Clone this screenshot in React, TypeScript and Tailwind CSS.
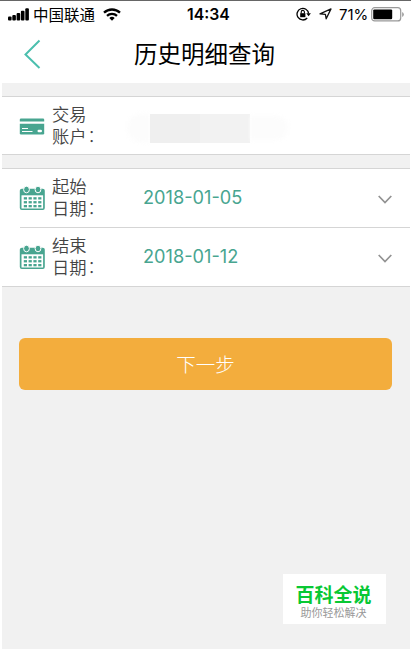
import type { ReactNode } from "react";

const SignalIcon = () => (
  <svg width="21" height="13" viewBox="0 0 21 13" fill="#000">
    <rect x="0" y="8.5" width="3.6" height="4" rx="1" />
    <rect x="4.3" y="7" width="3.6" height="5.5" rx="1" />
    <rect x="8.6" y="5" width="3.6" height="7.5" rx="1" />
    <rect x="12.9" y="2.8" width="3.6" height="9.7" rx="1" />
    <rect x="17.3" y="0.3" width="3.6" height="12.2" rx="1" />
  </svg>
);

const WifiIcon = () => (
  <svg width="18" height="13" viewBox="0 0 18 13" fill="none" stroke="#000" strokeWidth="2.3">
    <path d="M1 4.7a11.6 11.6 0 0 1 16 0" />
    <path d="M4 7.9a7.3 7.3 0 0 1 10 0" />
    <path d="M6.3 10 A4.2 4.2 0 0 1 11.7 10 L9 12.8Z" fill="#000" stroke="none" />
  </svg>
);

const RotationLockIcon = () => (
  <svg width="15" height="14" viewBox="0 0 15 14" fill="none" stroke="#000">
    <path d="M11.2 11A5.8 5.8 0 1 1 12.6 6.5" strokeWidth="1.3" />
    <path d="M10.3 6.3h4.6l-2.3 3z" fill="#000" stroke="none" />
    <rect x="4.2" y="6.2" width="5.2" height="4" fill="#000" stroke="none" />
    <path d="M5.2 6.5V5a1.6 1.6 0 0 1 3.2 0v1.5" strokeWidth="1.1" />
  </svg>
);

const LocationIcon = () => (
  <svg width="13" height="12" viewBox="0 0 13 12" fill="none" stroke="#111" strokeWidth="1.3" strokeLinejoin="round">
    <path d="M12 0.9 7.2 10.8 6.4 6.4 1 5.8z" />
  </svg>
);

const BatteryIcon = () => (
  <svg width="34" height="15" viewBox="0 0 34 15">
    <rect x="0.7" y="0.7" width="29" height="13.2" rx="3" fill="#fff" stroke="#999" strokeWidth="1.2" />
    <rect x="2.2" y="2.4" width="19" height="9.8" rx="1.2" fill="#000" />
    <path d="M31.2 5v5q1.6-.8 1.6-2.5T31.2 5z" fill="#999" />
  </svg>
);

const CardIcon = () => (
  <svg width="26" height="17" viewBox="0 0 26 17" fill="#48a590">
    <path d="M2 0.500h22q1.200 0 1.200 1.200V3.600H.8V1.700Q.8.500 2 .500z" />
    <path d="M.8 5.800h24.400v9.500q0 1.200-1.200 1.200H2q-1.200 0-1.200-1.200z" />
    <path d="M3 10.500h6M3 13.500h10.500" stroke="#fff" strokeWidth="1" />
    <rect x="18.500" y="11.800" width="4.500" height="2.500" rx="1.200" fill="#fff" />
  </svg>
);

const DAY_COLUMNS = [4.8, 9.6, 14.4, 19.2];
const DAY_ROWS = [11.2, 15.1, 19];

const CalendarIcon = () => (
  <svg width="27" height="25" viewBox="0 0 27 25" fill="#48a590">
    <rect x="0.8" y="2.800" width="25" height="21.200" rx="2" />
    <rect x="2.500" y="9.300" width="21.600" height="13.200" fill="#fff" />
    <g stroke="#fff" strokeWidth="1">
      <ellipse cx="7.500" cy="3.500" rx="2.900" ry="3.300" />
      <ellipse cx="19" cy="3.500" rx="2.900" ry="3.300" />
    </g>
    {DAY_ROWS.map((y) => DAY_COLUMNS.map((x) => <rect key={`${x}-${y}`} x={x} y={y} width="3.200" height="2.300" />))}
  </svg>
);

const ChevronDown = () => (
  <svg width="14" height="9" viewBox="0 0 14 9" fill="none" stroke="#929292" strokeWidth="1.700">
    <path d="M.7 1 7 7.500 13.300 1" />
  </svg>
);

type RowProps = {
  icon: ReactNode;
  label: [string, string];
  children: ReactNode;
};

const Row = ({ icon, label, children }: RowProps) => (
  <div className="flex h-[58px] items-center pl-[17px] pr-[18px]">
    <div className="w-[33px] shrink-0">{icon}</div>
    <div className="w-[91px] shrink-0 pb-[3px] text-[17.3px] font-[350] text-[#444]">
      <p className="h-[22px] leading-[22px]">{label[0]}</p>
      <p className="flex h-[22px] leading-[22px]">
        {label[1]}
        <span className="-ml-[3.5px] font-['Noto_Sans_CJK_TC',sans-serif] font-light">：</span>
      </p>
    </div>
    {children}
  </div>
);

const DateValue = ({ value }: { value: string }) => (
  <>
    <span className="flex-1 pb-[2px] font-['Inter',sans-serif] text-[18.2px] leading-6 text-[#48a590]">{value}</span>
    <span className="pt-[2px]">
      <ChevronDown />
    </span>
  </>
);

export default function App() {
  return (
    <div className="relative h-[649px] w-[411px] overflow-hidden border-t border-[#666] bg-white pl-[2px] pr-px font-['Noto_Sans_CJK_SC',sans-serif]">
      <header className="h-[82px]">
        <div className="flex h-[26px] items-center pl-[6px]">
          <SignalIcon />
          <span className="ml-[4px] w-[63px] whitespace-nowrap text-[15.5px] leading-5 text-black">中国联通</span>
          <span className="ml-[7px]">
            <WifiIcon />
          </span>
          <span className="ml-[66px] w-[44px] whitespace-nowrap pt-px font-['Inter',sans-serif] text-[15.8px] font-semibold leading-5">
            14:34
          </span>
          <span className="ml-[65px]">
            <RotationLockIcon />
          </span>
          <span className="ml-[8px]">
            <LocationIcon />
          </span>
          <span className="ml-[7px] w-[32px] whitespace-nowrap pt-px font-['Inter',sans-serif] text-[15px] leading-5">
            71%
          </span>
          <BatteryIcon />
        </div>
        <div className="flex h-[54px] items-center pl-[21px]">
          <svg width="18" height="30" viewBox="0 0 18 30" fill="none" stroke="#4bbfae" strokeWidth="2">
            <path d="M16.500 1.500 2.500 15.500 16.500 29" />
          </svg>
          <h1 className="ml-[93px] whitespace-nowrap pb-[2px] text-[23.500px] leading-8 text-black">历史明细查询</h1>
        </div>
      </header>

      <main className="h-[566px] bg-[#f1f1f1] pt-[13px]">
        <section className="h-[59px] border-y border-[#d5d5d5] bg-white">
          <Row icon={<CardIcon />} label={["交易", "账户"]}>
            <div className="flex h-[32px] items-center pt-[4px]">
              <div className="-ml-4 h-[28px] w-[23px] rounded-l-full bg-[#fcfcfc] blur-[2px]" />
              <div className="h-[29px] w-[50px] bg-[#efefef] blur-[0.500px]" />
              <div className="h-[29px] w-[50px] bg-[#f2f2f2] blur-[0.500px]" />
              <div className="h-[24px] w-[38px] rounded-r-full bg-[#fcfcfc] blur-[2px]" />
            </div>
          </Row>
        </section>

        <section className="mt-[13px] border-y border-[#d5d5d5] bg-white">
          <Row icon={<CalendarIcon />} label={["起始", "日期"]}>
            <DateValue value="2018-01-05" />
          </Row>
          <div className="ml-[18px] h-px bg-[#d5d5d5]" />
          <Row icon={<CalendarIcon />} label={["结束", "日期"]}>
            <DateValue value="2018-01-12" />
          </Row>
        </section>

        <button className="ml-[17px] mt-[51px] block h-[52px] w-[373px] rounded-[6px] bg-[#f3ad3d] text-[19.500px] font-light text-white">
          下一步
        </button>
      </main>

      <div className="absolute left-[283px] top-[573px] flex h-[50px] w-[103px] flex-col items-center bg-white pr-[2px] pt-[8px]">
        <span className="h-6 text-[19px] font-bold leading-6 text-[#09c834]">百科全说</span>
        <span className="text-[11px] leading-[12px] text-[#999]">助你轻松解决</span>
      </div>
    </div>
  );
}
